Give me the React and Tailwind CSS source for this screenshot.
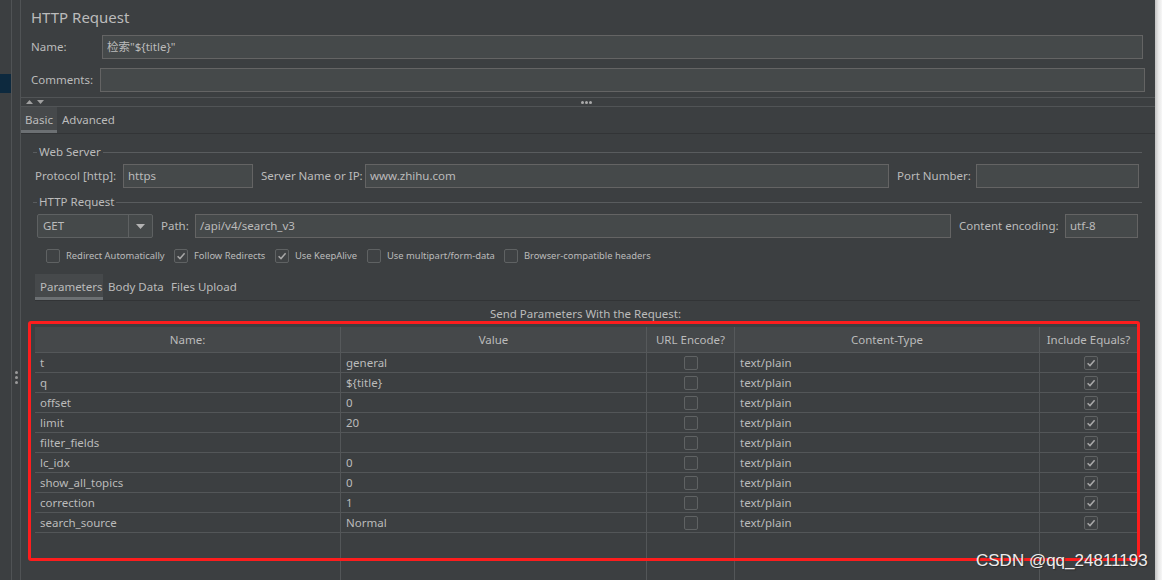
import React from "react";

const rows = [
  ["t", "general"],
  ["q", "${title}"],
  ["offset", "0"],
  ["limit", "20"],
  ["filter_fields", ""],
  ["lc_idx", "0"],
  ["show_all_topics", "0"],
  ["correction", "1"],
  ["search_source", "Normal"],
];

function Check({ checked, className = "" }) {
  return (
    <div
      className={
        "flex h-[14px] w-[14px] shrink-0 items-center justify-center rounded-[2px] border border-[#5f6263] bg-[#3f4244] " +
        className
      }
    >
      {checked && (
        <svg width="10" height="10" viewBox="0 0 10 10">
          <path d="M1.6 5.2 L4 7.6 L8.6 2.2" fill="none" stroke="#a8a8a8" strokeWidth="1.5" />
        </svg>
      )}
    </div>
  );
}

function Field({ children, className = "" }) {
  return (
    <div
      className={
        "flex h-[24px] items-center whitespace-nowrap border border-[#646464] bg-[#45494a] pl-[4px] text-[11.5px] leading-none text-[#bbbbbb] " +
        className
      }
    >
      {children}
    </div>
  );
}

function Legend({ title }) {
  return (
    <div className="ml-[12px] mr-[13px] flex h-[16px] items-center">
      <div className="h-px w-[4px] bg-[#595c5e]" />
      <span className="whitespace-nowrap px-[2px] leading-none">{title}</span>
      <div className="h-px flex-1 bg-[#595c5e]" />
    </div>
  );
}

const Lbl = ({ className = "", children }) => (
  <div className={"shrink-0 whitespace-nowrap leading-none " + className}>{children}</div>
);

export default function App() {
  return (
    <div className="relative flex h-[580px] w-[1162px] overflow-hidden bg-[#3c3f41] font-['Noto_Sans','Noto_Sans_CJK_SC',sans-serif] text-[11.5px] leading-none text-[#bbbbbb]">
      {/* left strips */}
      <div className="w-[12px] shrink-0 border-r border-[#505355]">
        <div className="mt-[74px] h-[19px] bg-[#0d293e]" />
      </div>
      <div className="flex w-[9px] shrink-0 flex-col items-center border-r border-[#505355] pt-[371px]">
        <div className="flex flex-col gap-[2px]">
          <div className="h-[3px] w-[3px] rounded-full bg-[#9a9a9a]" />
          <div className="h-[3px] w-[3px] rounded-full bg-[#9a9a9a]" />
          <div className="h-[3px] w-[3px] rounded-full bg-[#9a9a9a]" />
        </div>
      </div>

      {/* main */}
      <div className="flex min-w-0 flex-1 flex-col">
        <div className="flex h-[35px] items-center whitespace-nowrap pl-[10px] text-[15px]">HTTP Request</div>

        <div className="flex items-center pr-[12px]">
          <Lbl className="w-[81px] pl-[10px]">Name:</Lbl>
          <Field className="flex-1">检索"${"{"}title{"}"}"</Field>
        </div>
        <div className="mt-[9px] flex items-center pr-[10px]">
          <Lbl className="w-[79px] pl-[10px]">Comments:</Lbl>
          <Field className="flex-1" />
        </div>

        {/* split divider */}
        <div className="relative mt-[5px] flex h-[10px] items-center border-y border-[#515456]">
          <div className="ml-[5px] flex items-center gap-[4px]">
            <svg width="7" height="4" viewBox="0 0 7 4">
              <path d="M0 4 L3.5 0 L7 4 Z" fill="#a0a0a0" />
            </svg>
            <svg width="7" height="4" viewBox="0 0 7 4">
              <path d="M0 0 L7 0 L3.5 4 Z" fill="#a0a0a0" />
            </svg>
          </div>
          <div className="ml-[537px] flex gap-[1px]">
            <div className="h-[3px] w-[3px] rounded-full bg-[#aaaaaa]" />
            <div className="h-[3px] w-[3px] rounded-full bg-[#aaaaaa]" />
            <div className="h-[3px] w-[3px] rounded-full bg-[#aaaaaa]" />
          </div>
        </div>

        {/* Basic / Advanced tabs */}
        <div className="flex h-[27px] border-b border-[#323436]">
          <div className="flex h-[26px] w-[36px] items-center justify-center border-b-[3px] border-[#6c7073] bg-[#46494b] pt-[2px]">
            Basic
          </div>
          <div className="flex h-[26px] items-center whitespace-nowrap px-[5px]">Advanced</div>
        </div>

        {/* Web Server */}
        <div className="mt-[10px]">
          <Legend title="Web Server" />
        </div>
        <div className="mt-[4px] flex items-center pr-[16px] pl-[14px]">
          <Lbl className="w-[88px]">Protocol [http]:</Lbl>
          <Field className="w-[130px] shrink-0">https</Field>
          <Lbl className="ml-[8px] w-[104px]">Server Name or IP:</Lbl>
          <Field className="flex-1">www.zhihu.com</Field>
          <Lbl className="ml-[8px] w-[79px]">Port Number:</Lbl>
          <Field className="w-[163px] shrink-0" />
        </div>

        {/* HTTP Request */}
        <div className="mt-[6px]">
          <Legend title="HTTP Request" />
        </div>
        <div className="mt-[4px] flex items-center pr-[17px] pl-[16px]">
          <div className="flex h-[24px] w-[116px] shrink-0 items-stretch rounded-[2px] border border-[#5e6162] bg-[#45494a]">
            <div className="flex w-[91px] items-center border-r border-[#5e6162] pl-[5px]">GET</div>
            <div className="flex flex-1 items-center justify-center">
              <svg width="9" height="5" viewBox="0 0 9 5">
                <path d="M0 0 L9 0 L4.5 5 Z" fill="#b3b3b3" />
              </svg>
            </div>
          </div>
          <Lbl className="ml-[8px] w-[34px]">Path:</Lbl>
          <Field className="flex-1">/api/v4/search_v3</Field>
          <Lbl className="ml-[8px] w-[106px]">Content encoding:</Lbl>
          <Field className="w-[73px] shrink-0">utf-8</Field>
        </div>

        {/* checkboxes */}
        <div className="mt-[11px] flex h-[14px] items-center whitespace-nowrap pl-[25px] text-[9.4px]">
          <div className="flex w-[128px] shrink-0 items-center gap-[6px]">
            <Check />
            <span>Redirect Automatically</span>
          </div>
          <div className="flex w-[101px] shrink-0 items-center gap-[6px]">
            <Check checked />
            <span>Follow Redirects</span>
          </div>
          <div className="flex w-[92px] shrink-0 items-center gap-[6px]">
            <Check checked />
            <span>Use KeepAlive</span>
          </div>
          <div className="flex w-[137px] shrink-0 items-center gap-[6px]">
            <Check />
            <span>Use multipart/form-data</span>
          </div>
          <div className="flex shrink-0 items-center gap-[6px]">
            <Check />
            <span>Browser-compatible headers</span>
          </div>
        </div>

        {/* Parameters tabs */}
        <div className="mt-[11px] ml-[14px] mr-[15px] flex h-[27px] whitespace-nowrap border-b border-[#323436]">
          <div className="flex h-[26px] w-[68px] shrink-0 items-center border-b-[3px] border-[#6c7073] bg-[#46494b] pl-[5px] pt-[2px]">
            Parameters
          </div>
          <div className="flex h-[26px] w-[63px] shrink-0 items-center pl-[5px]">Body Data</div>
          <div className="flex h-[26px] shrink-0 items-center pl-[5px]">Files Upload</div>
        </div>

        <div className="mt-[5px] ml-[14px] flex h-[16px] w-[1101px] items-center justify-center whitespace-nowrap">
          Send Parameters With the Request:
        </div>

        {/* table */}
        <div className="mt-[5px] ml-[14px] flex w-[1102px] flex-1 flex-col whitespace-nowrap">
          <div className="grid h-[26px] grid-cols-[306px_306px_88px_305px_97px] border-b border-[#545759] bg-[#45484a]">
            <div className="flex items-center justify-center border-r border-[#56595b]">Name:</div>
            <div className="flex items-center justify-center border-r border-[#56595b]">Value</div>
            <div className="flex items-center justify-center border-r border-[#56595b]">URL Encode?</div>
            <div className="flex items-center justify-center border-r border-[#56595b]">Content-Type</div>
            <div className="flex items-center justify-center">Include Equals?</div>
          </div>
          {rows.map(([n, v]) => (
            <div
              key={n}
              className="grid h-[20px] grid-cols-[306px_306px_88px_305px_97px] border-b border-[#535658]"
            >
              <div className="flex items-center border-r border-[#535658] pl-[5px]">{n}</div>
              <div className="flex items-center border-r border-[#535658] pl-[5px]">{v}</div>
              <div className="flex items-center justify-center border-r border-[#535658]">
                <Check />
              </div>
              <div className="flex items-center border-r border-[#535658] pl-[5px]">text/plain</div>
              <div className="flex items-center justify-center pl-[5px]">
                <Check checked />
              </div>
            </div>
          ))}
          <div className="grid flex-1 grid-cols-[306px_306px_88px_305px_97px]">
            <div className="border-r border-[#535658]" />
            <div className="border-r border-[#535658]" />
            <div className="border-r border-[#535658]" />
            <div className="border-r border-[#535658]" />
            <div />
          </div>
        </div>
      </div>

      {/* right shadow strip */}
      <div className="w-[7px] shrink-0 bg-gradient-to-r from-[#c2c2c2] via-[#e6e6e6] to-[#f7f7f7]" />

      {/* red annotation box */}
      <div className="pointer-events-none absolute left-[28px] top-[321px] h-[240px] w-[1112px] rounded-[3px] border-[3px] border-[#fd1d1d]" />

      {/* watermark */}
      <div className="pointer-events-none absolute left-[976px] top-[550px] whitespace-nowrap font-['Liberation_Sans',Arial,sans-serif] text-[17px] leading-[22px] text-[#ececec] [text-shadow:1px_1px_1px_#2a2a2a]">
        CSDN @qq_24811193
      </div>
    </div>
  );
}
